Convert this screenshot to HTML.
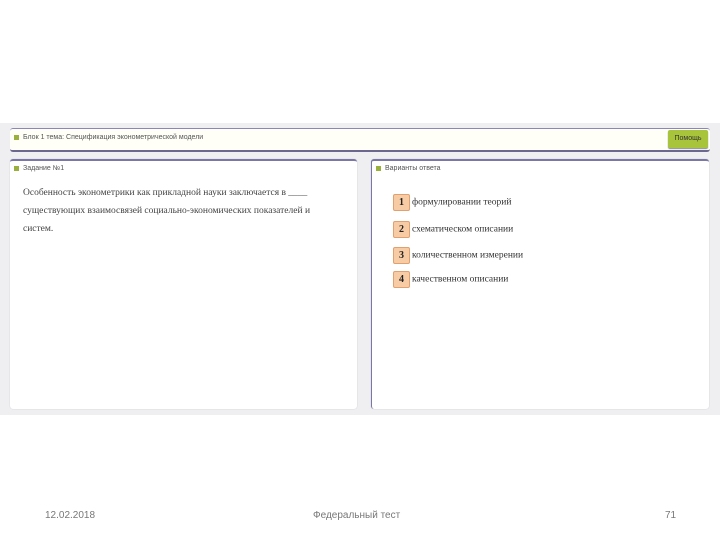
<!DOCTYPE html>
<html><head><meta charset="utf-8"><style>
body{margin:0;width:720px;height:540px;background:#fff;font-family:"Liberation Sans",sans-serif;position:relative;overflow:hidden}
.gray{position:absolute;left:0;top:123px;width:720px;height:292px;background:#efeff1}
.bar{position:absolute;left:10px;top:128px;width:700px;height:21px;background:#fffff8;border-top:1px solid #8a86b8;border-bottom:2px solid #6b678f;border-radius:3px}
.sq{display:inline-block;width:5px;height:5px;background:#9ab03c;margin-right:4px;vertical-align:middle}
.bar span.t{position:absolute;left:4px;top:5px;font-size:7px;color:#555}
.btn{position:absolute;right:2px;top:1px;width:40px;height:18px;background:#a8c43a;border-radius:2px;font-size:7px;color:#333;text-align:center;line-height:18px;box-shadow:0 1px 1px #889}
.panel{position:absolute;top:159px;height:248px;background:#fff;border-top:2px solid #7a76a8;border-radius:3px;box-shadow:0 0 1px #bbb}
.ph{position:absolute;left:4px;top:4px;font-size:7px;color:#555}
.q{position:absolute;left:13px;top:23px;width:310px;font-family:"Liberation Serif",serif;font-size:9.5px;line-height:18px;color:#444}
.opt{position:absolute;left:21px;font-family:"Liberation Serif",serif;font-size:9.5px;color:#333}
.num{display:inline-block;width:15px;height:15px;background:#f7cba3;border:1px solid #e0a070;border-radius:2px;text-align:center;line-height:15px;font-weight:bold;font-size:10px;color:#222;margin-right:2px;vertical-align:middle}
.foot{position:absolute;top:510px;font-size:10px;color:#777}
</style></head><body>
<div class="gray"></div>
<div class="bar"><span class="t"><span class="sq"></span>Блок 1 тема: Спецификация эконометрической модели</span><div class="btn">Помощь</div></div>
<div class="panel" style="left:10px;width:347px">
<div class="ph"><span class="sq"></span>Задание №1</div>
<div class="q">Особенность эконометрики как прикладной науки заключается в ____ существующих взаимосвязей социально-экономических показателей и систем.</div>
</div>
<div class="panel" style="left:371px;width:337px;border-left:1px solid #7a76a8">
<div class="ph"><span class="sq"></span>Варианты ответа</div>
<div class="opt" style="top:33px"><span class="num">1</span>формулировании теорий</div>
<div class="opt" style="top:60px"><span class="num">2</span>схематическом описании</div>
<div class="opt" style="top:86px"><span class="num">3</span>количественном измерении</div>
<div class="opt" style="top:110px"><span class="num">4</span>качественном описании</div>
</div>
<div class="foot" style="left:45px">12.02.2018</div>
<div class="foot" style="left:313px">Федеральный тест</div>
<div class="foot" style="left:665px">71</div>
</body></html>
